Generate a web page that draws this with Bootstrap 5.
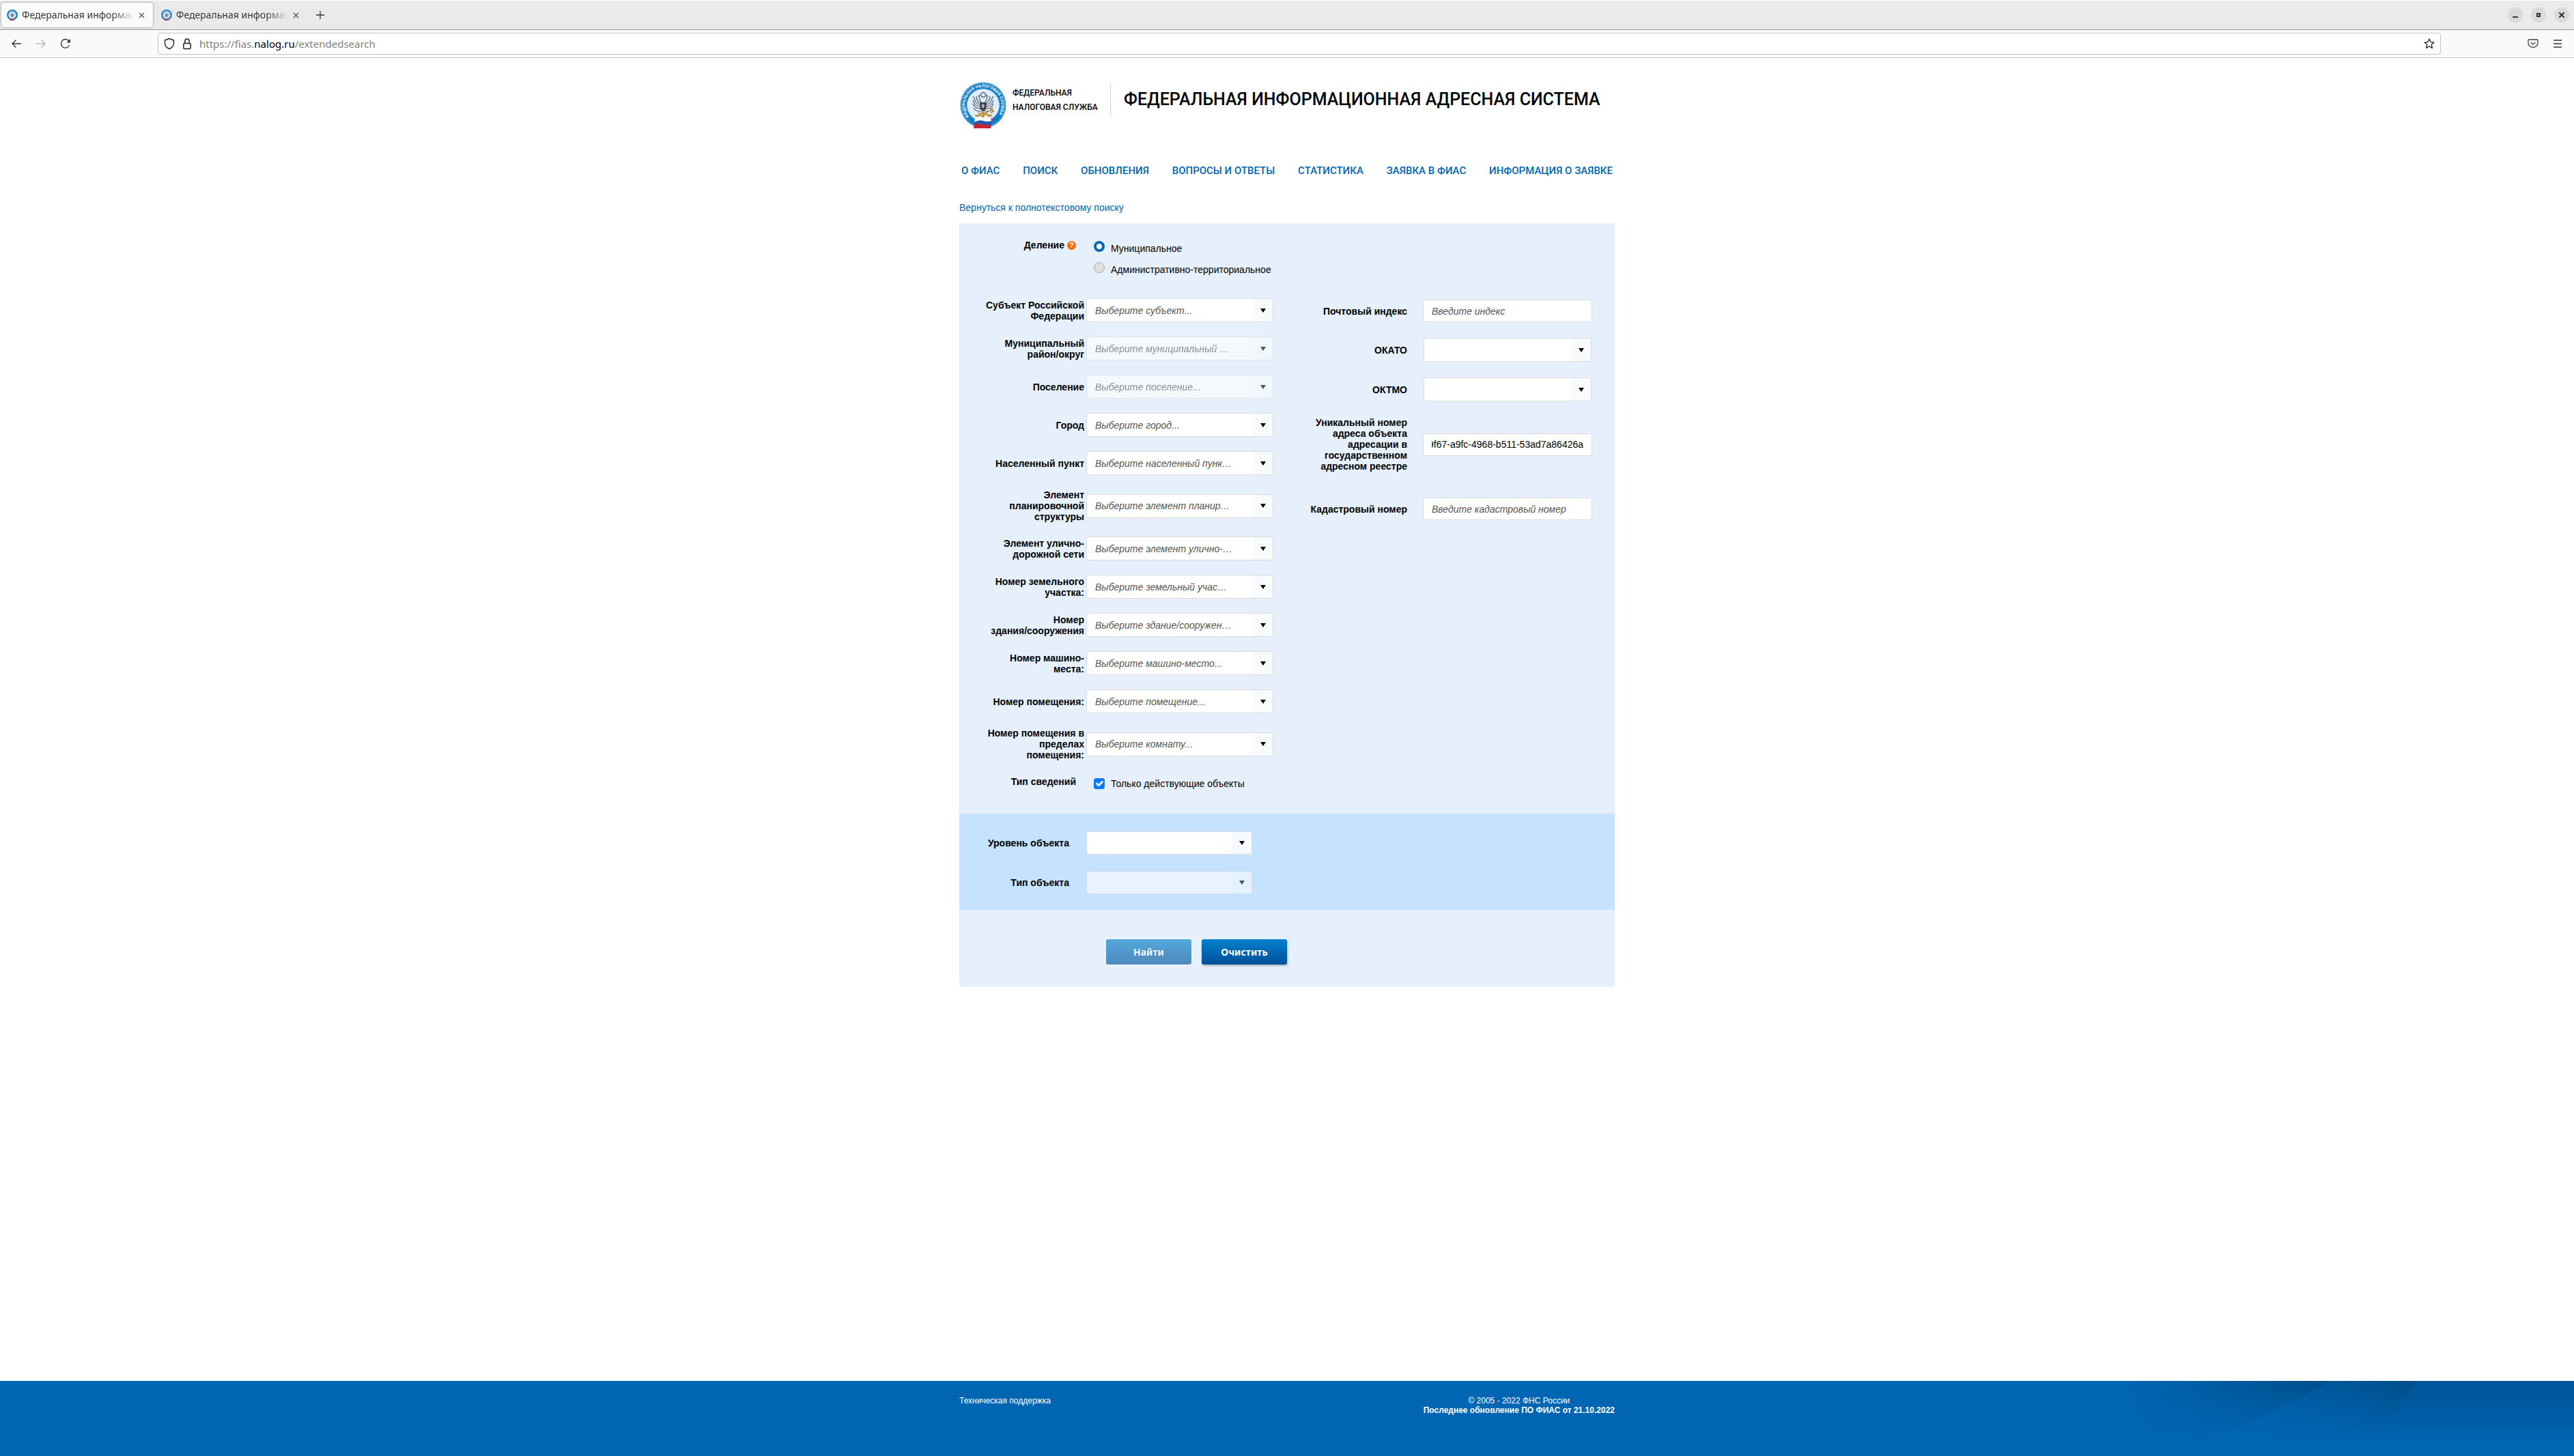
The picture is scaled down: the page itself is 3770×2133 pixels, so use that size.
<!DOCTYPE html>
<html lang="ru">
<head>
<meta charset="utf-8">
<meta name="viewport" content="width=device-width, initial-scale=1">
<title>Федеральная информационная адресная система</title>
<link href="https://cdn.jsdelivr.net/npm/bootstrap@5.3.0/dist/css/bootstrap.min.css" rel="stylesheet">
<style>
  body { font: 14px/16px "Liberation Sans", Arial, sans-serif; color: #000; background: #fff; }
  a { text-decoration: none; }
  svg { flex: none; }

  /* browser frame */
  .tabstrip { height: 44px; background: #eaeaea; border-top: 1px solid #fff; border-bottom: 1px solid #999; padding: 0 7px 0 2px; font: 14px/20px "Noto Sans", sans-serif; color: #333; }
  .tab-item { height: 36px; width: 222px; padding: 0 12px 0 8px; border-radius: 4px; gap: 6px; }
  .tab-item.active { background: #fbfbfb; box-shadow: 0 0 3px rgba(0,0,0,.45); }
  .tab-title { overflow: hidden; white-space: nowrap; -webkit-mask-image: linear-gradient(90deg, #000 80%, transparent); mask-image: linear-gradient(90deg, #000 80%, transparent); }
  .plain-btn { border: 0; background: none; padding: 0; display: flex; align-items: center; justify-content: center; color: #333; }
  .tab-new { margin-left: 13px; }
  .win-btn { width: 22px; height: 22px; border-radius: 50%; background: #dadada; }
  .toolbar { height: 41px; background: #fafafa; border-bottom: 1px solid #c6c6c6; }
  .tool-side { width: 231px; padding-left: 15px; gap: 18px; }
  .tool-end { width: 195px; padding-right: 14px; gap: 18px; }
  .urlbar { height: 32px; border: 1px solid #c4c4c4; border-radius: 4px; background: #fff; padding: 0 8px; gap: 12px; font: 15px/20px "Noto Sans", sans-serif; color: #808080; }
  .urlbar b { font-weight: 400; color: #000; }
  .url-text { outline: 0; }

  /* site */
  .site { width: 100%; max-width: 960px; }
  .brand-type { font-family: Roboto, "Liberation Sans", sans-serif; font-weight: 500; }
  .site-head { padding-top: 34px; height: 138px; }
  .org { font-size: 12px; line-height: 21px; color: #000; margin: 7px 20px 0 8px; width: 123px; white-space: nowrap; }
  .head-rule { width: 1px; height: 46px; background: #ccc; margin: 4px 19px 0 0; flex: none; }
  .site-title { font-size: 25px; line-height: 40px; margin: 7px 0 0; white-space: nowrap; }
  .site-nav { font-size: 15px; line-height: 24px; padding: 0 3px; white-space: nowrap; margin-top: 15px; }
  .site-nav a, .back-link { color: #0066b3; }
  .back-link { display: inline-block; margin: 34px 0 15px; }

  .panel { background: #e5f0fc; padding-top: 24px; }
  .bold-label { font-weight: 700; text-align: right; }
  .lab-left { width: 153px; margin-left: 30px; }
  .lab-mid { width: 141px; margin-left: 30px; }
  .lab-obj { width: 131px; margin-left: 30px; }
  .lab-right { width: 144px; }
  .field-row { display: flex; align-items: center; }
  .col-a { width: 460px; }
  .col-a .field-row { margin-bottom: 21px; gap: 3px; }
  .col-b { padding: 2px 33px 0 0; }
  .col-b .field-row { margin-bottom: 23px; gap: 23px; justify-content: flex-end; }
  .col-b .field-row.tall { margin-bottom: 38px; }

  .pick, .entry { border: 1px solid #dcdcdc; border-radius: 3px; background-color: #fff; color: #555; font-size: 14px; line-height: 17px; font-style: italic; padding: 0 12px; }
  .pick { appearance: none; height: 35px; width: 274px; padding-top: 1px;
    background-image: url("data:image/svg+xml,%3Csvg xmlns='http://www.w3.org/2000/svg' width='8' height='6'%3E%3Cpath d='M0 0h8L4 6z'/%3E%3C/svg%3E"), linear-gradient(#f7fbfe, #f7fbfe);
    background-repeat: no-repeat; background-position: right 10px center, right 0 top 0; background-size: 8px 6px, 29px 100%; }
  .pick:disabled { opacity: .64; }
  .pick.mid { width: 246px; }
  .mid-wrap { padding: 0 1px; }
  .pick.low { width: 243px; height: 34px; }
  .entry { width: 248px; height: 33px; }
  .entry::placeholder { color: #555; opacity: 1; }
  .entry.upright { font-style: normal; color: #000; }

  .division { height: 86px; align-items: flex-start; }
  .hint { width: 13px; height: 13px; border-radius: 50%; background: #ff6a00; color: #fff; font: 700 10px/13px "Liberation Sans", sans-serif; }
  .choice { gap: 9px; }
  .choice-set { padding: 2px 0 0 26px; gap: 12px; }
  .choice-set label { padding-top: 3px; }
  .form-check-input.ring { width: 16px; height: 16px; margin: 0; background: #e0e0e0; border: 1px solid #aaa; flex: none; }
  .form-check-input.ring:checked { background: #fff; border: 4px solid #0066b3; }
  .form-check-input.tick { width: 16px; height: 16px; margin: 0; flex: none; border-radius: 3px; }
  .form-check-input.tick:checked { background-color: #0a7aff; border-color: #0a7aff; background-size: 18px 18px; }
  .info-row { padding: 2px 0 36px; }
  .info-row .choice { padding: 3px 0 0 26px; }

  .object-band { background: #c5e2ff; padding: 26px 0 23px; }
  .object-band .field-row { gap: 25px; }
  .actions { padding: 43px 0 33px 215px; gap: 15px; }
  .cmd { width: 125px; height: 37px; border: 0; border-radius: 3px; color: #fff; font: 700 14px/20px "Noto Sans", sans-serif; background: linear-gradient(#0081cc, #004e98); box-shadow: 1px 2px 3px rgba(0,0,0,.25); }
  .cmd:disabled { opacity: .64; box-shadow: 0 0 0 2px #f4f9ff; }

  .site-foot { background: #0066b3; color: #fff; height: 110px; font-size: 12px; line-height: 14px; position: relative; }
  .foot-art { position: absolute; right: 0; top: 0; width: 700px; height: 110px; }
  .site-foot a { color: #fff; }
  .foot-line { padding-top: 22px; position: relative; }
</style>
<script src="https://cdn.jsdelivr.net/npm/bootstrap@5.3.0/dist/js/bootstrap.bundle.min.js"></script>
</head>
<body class="d-flex flex-column min-vh-100">

<svg width="0" height="0" class="position-absolute" aria-hidden="true">
  <symbol id="emblem" viewBox="0 0 68 69">
    <circle cx="34" cy="34" r="33.5" fill="#0f7cc6"/>
    <circle cx="34" cy="34" r="32.3" fill="none" stroke="#7fb9e2" stroke-width="1"/>
    <circle cx="34" cy="34" r="23.5" fill="#dfeefa" stroke="#b5d5ee" stroke-width="1"/>
    <g stroke="#596069" fill="none" stroke-width="1.3">
      <path d="M31 33c-5 0-9-3-10-9l-2-3M31 31c-4-1-7-4-7-10M31 36c-7 0-10-3-12-9M32 39c-6 1-11-2-13-7M33 42c-5 2-10 1-13-4"/>
      <path d="M37 33c5 0 9-3 10-9l2-3M37 31c4-1 7-4 7-10M37 36c7 0 10-3 12-9M36 39c6 1 11-2 13-7M35 42c5 2 10 1 13-4"/>
      <path d="M31 30l-3-7 1-3-3 1M37 30l3-7-1-3 3 1M30 18l4-3 4 3-2 4h-4z"/>
    </g>
    <path d="M29.500 30h9v9l-4.500 5-4.500-5z" fill="#383d45"/>
    <path d="M32 33l2-1 2 2-1 5-3-2z" fill="#a9b3bd"/>
    <path d="M25 51l9-7 10 7M27 45l6 6 8-8M22 49l6 1M41 48l6 2M34 42v10M44 38l5 5-4 2" fill="none" stroke="#b98d35" stroke-width="2"/>
    <path d="M21 56q6-5 13-2t13-1l-1 9-1 6q-6 0-11 0t-14 0z" fill="#c9232d"/>
    <path d="M21 55q6-4 13-1t12-1v9q-6 3-12 0t-12 1z" fill="#1d5bb0"/>
    <path d="M22 53q6-3 12-1t11-1l1 6q-6 2-12 0t-13 2z" fill="#fff"/>
  </symbol>
  <symbol id="cross" viewBox="0 0 10 10"><path d="M1 1l8 8M9 1L1 9" fill="none" stroke="currentColor" stroke-width="1.2"/></symbol>
</svg>

<div class="browser-frame">
  <div class="tabstrip d-flex align-items-center">
    <div class="tab-item active d-flex align-items-center">
      <svg width="16" height="18"><use href="#emblem"/></svg>
      <span class="tab-title flex-grow-1">Федеральная информационная</span>
      <button class="plain-btn" aria-label="Закрыть вкладку"><svg width="9" height="9"><use href="#cross"/></svg></button>
    </div>
    <div class="tab-item d-flex align-items-center ms-1">
      <svg width="16" height="18"><use href="#emblem"/></svg>
      <span class="tab-title flex-grow-1">Федеральная информационная</span>
      <button class="plain-btn" aria-label="Закрыть вкладку"><svg width="9" height="9"><use href="#cross"/></svg></button>
    </div>
    <button class="plain-btn tab-new" aria-label="Новая вкладка"><svg width="12" height="12" viewBox="0 0 12 12"><path d="M6 0v12M0 6h12" stroke="#333" stroke-width="1.3"/></svg></button>
    <div class="d-flex ms-auto" style="gap:12px">
      <button class="plain-btn win-btn" aria-label="Свернуть"><svg width="8" height="8"><path d="M0 7h8" stroke="#333" stroke-width="2"/></svg></button>
      <button class="plain-btn win-btn" aria-label="Развернуть"><svg width="6" height="6"><path d="M1 1h4v4h-4z" fill="none" stroke="#333" stroke-width="2"/></svg></button>
      <button class="plain-btn win-btn" aria-label="Закрыть"><svg width="8" height="8"><path d="M0 0l8 8M8 0l-8 8" stroke="#333" stroke-width="2"/></svg></button>
    </div>
  </div>
  <div class="toolbar d-flex align-items-center">
    <div class="tool-side d-flex align-items-center">
      <button class="plain-btn" aria-label="Назад"><svg width="18" height="16" viewBox="0 0 18 16" fill="none" stroke="#333" stroke-width="1.400"><path d="M16 8H3M8.500 2.500L3 8l5.500 5.500"/></svg></button>
      <button class="plain-btn" aria-label="Вперёд" disabled><svg width="18" height="16" viewBox="0 0 18 16" fill="none" stroke="#b5b5b5" stroke-width="1.400"><path d="M2 8h13M9.500 2.500L15 8l-5.500 5.500"/></svg></button>
      <button class="plain-btn" aria-label="Обновить"><svg width="18" height="16" viewBox="0 0 18 16" fill="none" stroke="#333" stroke-width="1.400"><path d="M14.500 10.500A6.300 6.300 0 1 1 14 4.300"/><path d="M16 1v5.500h-5.500z" fill="#333" stroke="none"/></svg></button>
    </div>
    <div class="urlbar d-flex align-items-center flex-grow-1">
      <svg width="16" height="18" viewBox="0 0 16 18" fill="none" stroke="#222" stroke-width="1.400"><path d="M8 1.500L14.500 4v4c0 4-2.500 7-6.500 8.500C4 15 1.500 12 1.500 8V4z" stroke-linejoin="round"/></svg>
      <svg width="12" height="17" viewBox="0 0 12 17" fill="none" stroke="#222" stroke-width="1.500"><rect x=".8" y="7.500" width="10.400" height="8" rx="1.500"/><path d="M2.800 7.500V4.200a3.200 3.200 0 0 1 6.400 0v3.300"/></svg>
      <div class="url-text flex-grow-1" role="textbox" aria-label="Адрес" contenteditable="true">https://fias.<b>nalog.ru</b>/extendedsearch</div>
      <button class="plain-btn" aria-label="Добавить закладку"><svg width="16" height="16" viewBox="0 0 16 16"><path d="M8 1l2 4.600 5 .5-3.800 3.300 1.200 5L8 11.800l-4.400 2.600 1.200-5L1 6.100l5-.5z" fill="none" stroke="#222" stroke-width="1.300" stroke-linejoin="round"/></svg></button>
    </div>
    <div class="tool-end d-flex align-items-center justify-content-end">
      <button class="plain-btn" aria-label="Pocket"><svg width="16" height="14" viewBox="0 0 16 14" fill="none" stroke="#444" stroke-width="1.300"><path d="M2 1h12q1 0 1 1v4a7 6.500 0 0 1-14 0V2q0-1 1-1z"/><path d="M4.500 5L8 8.200 11.500 5"/></svg></button>
      <button class="plain-btn mx-1" aria-label="Меню"><svg width="12" height="12" stroke="#333" stroke-width="1.400"><path d="M0 1h12M0 6h12M0 11h12"/></svg></button>
    </div>
  </div>
</div>

<main class="site mx-auto">
  <header class="site-head d-flex align-items-start">
    <svg width="70" height="71" viewBox="-1 -1 70 71" role="img" aria-label="ФНС">
      <path id="ring-path" d="M13.500 51A26.500 26.500 0 1 1 54 51.500" fill="none"/>
      <use href="#emblem" width="68" height="69"/>
      <text font-family="Liberation Sans" font-weight="700" font-size="6" fill="#fff"><textPath href="#ring-path">ФЕДЕРАЛЬНАЯ НАЛОГОВАЯ СЛУЖБА</textPath></text>
    </svg>
    <a class="org brand-type" href="#">ФЕДЕРАЛЬНАЯ<br>НАЛОГОВАЯ СЛУЖБА</a>
    <span class="head-rule"></span>
    <h1 class="site-title brand-type">ФЕДЕРАЛЬНАЯ ИНФОРМАЦИОННАЯ АДРЕСНАЯ СИСТЕМА</h1>
  </header>
  <nav class="site-nav brand-type d-flex justify-content-between">
    <a href="#">О ФИАС</a><a href="#">ПОИСК</a><a href="#">ОБНОВЛЕНИЯ</a><a href="#">ВОПРОСЫ И ОТВЕТЫ</a><a href="#">СТАТИСТИКА</a><a href="#">ЗАЯВКА В ФИАС</a><a href="#">ИНФОРМАЦИЯ О ЗАЯВКЕ</a>
  </nav>
  <a class="back-link" href="#">Вернуться к полнотекстовому поиску</a>

  <form class="panel">
    <div class="division d-flex">
      <div class="lab-mid d-flex justify-content-end align-items-center bold-label"><span>Деление</span><span class="hint text-center ms-1">?</span></div>
      <div class="choice-set d-flex flex-column">
        <div class="choice d-flex"><input class="form-check-input ring" type="radio" name="division" id="d1" checked><label for="d1">Муниципальное</label></div>
        <div class="choice d-flex"><input class="form-check-input ring" type="radio" name="division" id="d2"><label for="d2">Административно-территориальное</label></div>
      </div>
    </div>

    <div class="d-flex align-items-start">
      <div class="col-a">
        <div class="field-row"><label class="bold-label lab-left" for="a1">Субъект Российской Федерации</label><select class="pick" id="a1"><option>Выберите субъект...</option></select></div>
        <div class="field-row"><label class="bold-label lab-left" for="a2">Муниципальный район/округ</label><select class="pick" id="a2" disabled><option>Выберите муниципальный …</option></select></div>
        <div class="field-row"><label class="bold-label lab-left" for="a3">Поселение</label><select class="pick" id="a3" disabled><option>Выберите поселение...</option></select></div>
        <div class="field-row"><label class="bold-label lab-left" for="a4">Город</label><select class="pick" id="a4"><option>Выберите город...</option></select></div>
        <div class="field-row"><label class="bold-label lab-left" for="a5">Населенный пункт</label><select class="pick" id="a5"><option>Выберите населенный пунк…</option></select></div>
        <div class="field-row"><label class="bold-label lab-left" for="a6">Элемент планировочной структуры</label><select class="pick" id="a6"><option>Выберите элемент планир…</option></select></div>
        <div class="field-row"><label class="bold-label lab-left" for="a7">Элемент улично-дорожной сети</label><select class="pick" id="a7"><option>Выберите элемент улично-…</option></select></div>
        <div class="field-row"><label class="bold-label lab-left" for="a8">Номер земельного участка:</label><select class="pick" id="a8"><option>Выберите земельный учас…</option></select></div>
        <div class="field-row"><label class="bold-label lab-left" for="a9">Номер <span class="text-nowrap">здания/сооружения</span></label><select class="pick" id="a9"><option>Выберите здание/сооружен…</option></select></div>
        <div class="field-row"><label class="bold-label lab-left" for="a10">Номер машино-места:</label><select class="pick" id="a10"><option>Выберите машино-место...</option></select></div>
        <div class="field-row"><label class="bold-label lab-left" for="a11">Номер помещения:</label><select class="pick" id="a11"><option>Выберите помещение...</option></select></div>
        <div class="field-row"><label class="bold-label lab-left" for="a12">Номер помещения в пределах помещения:</label><select class="pick" id="a12"><option>Выберите комнату...</option></select></div>
      </div>
      <div class="col-b flex-grow-1">
        <div class="field-row"><label class="bold-label lab-right" for="b1">Почтовый индекс</label><input class="entry" id="b1" type="text" placeholder="Введите индекс"></div>
        <div class="field-row"><label class="bold-label lab-right" for="b2">ОКАТО</label><div class="mid-wrap"><select class="pick mid d-block" id="b2"><option></option></select></div></div>
        <div class="field-row"><label class="bold-label lab-right" for="b3">ОКТМО</label><div class="mid-wrap"><select class="pick mid d-block" id="b3"><option></option></select></div></div>
        <div class="field-row tall"><label class="bold-label lab-right" for="b4">Уникальный номер адреса объекта адресации в государственном адресном реестре</label><input class="entry upright" id="b4" type="text" value="9f67-a9fc-4968-b511-53ad7a86426a"></div>
        <div class="field-row"><label class="bold-label lab-right" for="b5">Кадастровый номер</label><input class="entry" id="b5" type="text" placeholder="Введите кадастровый номер"></div>
      </div>
    </div>

    <div class="info-row d-flex">
      <span class="bold-label lab-mid">Тип сведений</span>
      <div class="choice d-flex"><input class="form-check-input tick" type="checkbox" id="act" checked><label for="act">Только действующие объекты</label></div>
    </div>

    <div class="object-band d-flex flex-column gap-4">
      <div class="field-row"><label class="bold-label lab-obj" for="o1">Уровень объекта</label><select class="pick low" id="o1"><option></option></select></div>
      <div class="field-row"><label class="bold-label lab-obj" for="o2">Тип объекта</label><select class="pick low" id="o2" disabled><option></option></select></div>
    </div>

    <div class="actions d-flex">
      <button class="cmd" type="submit" disabled>Найти</button>
      <button class="cmd" type="reset">Очистить</button>
    </div>
  </form>
</main>

<footer class="site-foot mt-auto">
  <svg class="foot-art" viewBox="0 0 700 110" preserveAspectRatio="none" aria-hidden="true">
    <defs>
      <linearGradient id="fade-x"><stop offset="0" stop-color="#004d88" stop-opacity="0"/><stop offset="1" stop-color="#004d88"/></linearGradient>
      <linearGradient id="fade-y" x2="0" y2="1"><stop offset="0" stop-color="#0066b3" stop-opacity="0"/><stop offset=".85" stop-color="#0066b3"/></linearGradient>
      <linearGradient id="right-y" x2="0" y2="1"><stop offset=".15" stop-color="#00569a"/><stop offset=".85" stop-color="#0066b3"/></linearGradient>
    </defs>
    <path d="M40 0H346L235 56Q180 90 40 110z" fill="url(#fade-x)"/>
    <path d="M346 0H468L408 110H150L235 56z" fill="url(#fade-x)"/>
    <path d="M0 0H468L408 110H0z" fill="url(#fade-y)"/>
    <path d="M468 0H700V110H408z" fill="url(#right-y)"/>
  </svg>
  <div class="foot-line site mx-auto d-flex justify-content-between">
    <a href="#">Техническая поддержка</a>
    <div class="text-center">© 2005 - 2022 ФНС России<br><strong>Последнее обновление ПО ФИАС от 21.10.2022</strong></div>
  </div>
</footer>
<script>
  // keep the end of the long identifier in view
  const uid = document.getElementById('b4');
  uid.scrollLeft = uid.scrollWidth;
</script>
</body>
</html>
